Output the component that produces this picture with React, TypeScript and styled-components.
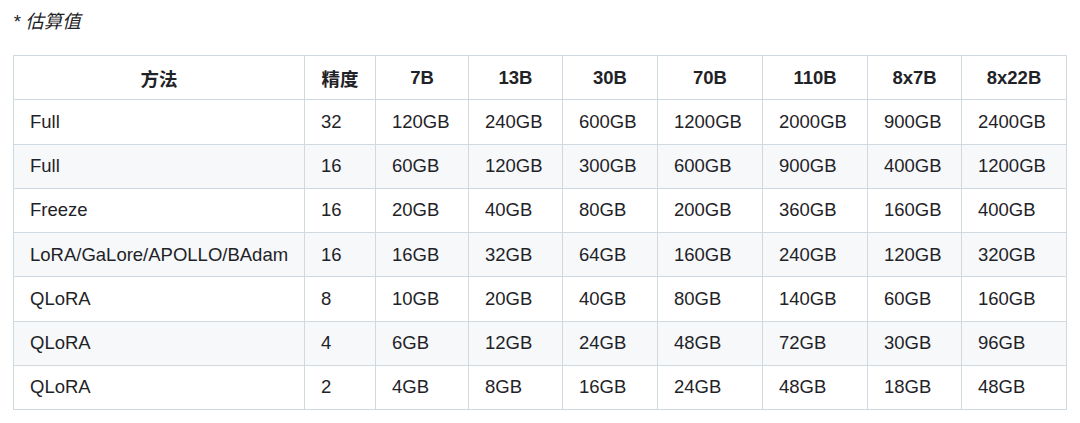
import styled, { createGlobalStyle } from "styled-components";

const GlobalStyle = createGlobalStyle`
  html, body {
    margin: 0;
    padding: 0;
    background: #ffffff;
  }
  body {
    font-family: "Liberation Sans", "Noto Sans CJK SC", sans-serif;
    color: #1f2328;
  }
`;

const Page = styled.div`
  padding: 8px 13px 0 13px;
`;

const Note = styled.p`
  margin: 0 0 19px 0;
  font-size: 18.5px;
  line-height: 28px;
  font-style: italic;
`;

const Table = styled.table`
  border-collapse: collapse;
  border-spacing: 0;
  table-layout: fixed;
  width: 1053px;
  font-size: 18.5px;
`;

const Col = styled.col<{ $w: number }>`
  width: ${(p) => p.$w}px;
`;

const Row = styled.tr<{ $striped?: boolean }>`
  height: 44.25px;
  background: ${(p) => (p.$striped ? "#f6f8fa" : "#ffffff")};
  border-top: 1px solid #d1d9e0;
`;

const HeadCell = styled.th`
  border: 1px solid #d1d9e0;
  padding: 0 16px;
  font-weight: 700;
  text-align: center;
  color: #1f2328;
  white-space: nowrap;
`;

const Cell = styled.td`
  border: 1px solid #d1d9e0;
  padding: 0 16px;
  text-align: left;
  white-space: nowrap;
`;

const widths = [291, 71, 93, 94, 95, 105, 105, 94, 105];
const headers = ["方法", "精度", "7B", "13B", "30B", "70B", "110B", "8x7B", "8x22B"];

const rows: string[][] = [
  ["Full", "32", "120GB", "240GB", "600GB", "1200GB", "2000GB", "900GB", "2400GB"],
  ["Full", "16", "60GB", "120GB", "300GB", "600GB", "900GB", "400GB", "1200GB"],
  ["Freeze", "16", "20GB", "40GB", "80GB", "200GB", "360GB", "160GB", "400GB"],
  ["LoRA/GaLore/APOLLO/BAdam", "16", "16GB", "32GB", "64GB", "160GB", "240GB", "120GB", "320GB"],
  ["QLoRA", "8", "10GB", "20GB", "40GB", "80GB", "140GB", "60GB", "160GB"],
  ["QLoRA", "4", "6GB", "12GB", "24GB", "48GB", "72GB", "30GB", "96GB"],
  ["QLoRA", "2", "4GB", "8GB", "16GB", "24GB", "48GB", "18GB", "48GB"],
];

export default function App() {
  return (
    <Page>
      <GlobalStyle />
      <Note>* 估算值</Note>
      <Table>
        <colgroup>
          {widths.map((w, i) => (
            <Col key={i} $w={w} />
          ))}
        </colgroup>
        <thead>
          <Row>
            {headers.map((h) => (
              <HeadCell key={h}>{h}</HeadCell>
            ))}
          </Row>
        </thead>
        <tbody>
          {rows.map((r, i) => (
            <Row key={i} $striped={i % 2 === 1}>
              {r.map((c, j) => (
                <Cell key={j}>{c}</Cell>
              ))}
            </Row>
          ))}
        </tbody>
      </Table>
    </Page>
  );
}
